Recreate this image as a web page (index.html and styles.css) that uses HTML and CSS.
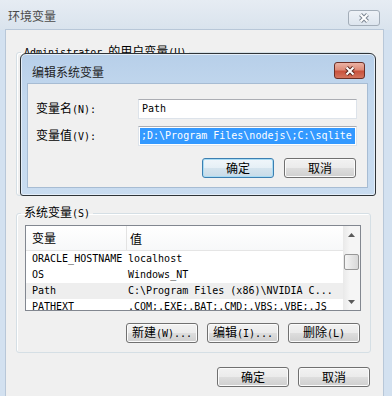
FILE: index.html
```html
<!DOCTYPE html>
<html lang="zh-CN">
<head>
<meta charset="UTF-8">
<title>环境变量</title>
<link rel="stylesheet" href="styles.css">
</head>
<body>

<div class="window">
    <div class="win-title">
        <span class="win-caption">环境变量</span>
        <span class="close-btn inactive">
            <svg width="12" height="10" viewBox="0 0 12 10"><path d="M2.5 1.5 L9.5 8.5 M9.5 1.5 L2.5 8.5" stroke="#7d8793" stroke-width="4"/><path d="M2.5 1.5 L9.5 8.5 M9.5 1.5 L2.5 8.5" stroke="#fff" stroke-width="2"/></svg>
        </span>
    </div>
    <div class="win-client">
        <fieldset class="group user-group">
            <legend><span class="m">Administrator </span>的用户变量<span class="m">(U)</span></legend>
        </fieldset>
        <fieldset class="group sys-group">
            <legend>系统变量<span class="m">(S)</span></legend>
            <div class="listview">
                <div class="list-body">
                    <div class="list-header">
                        <span class="col-name">变量</span>
                        <span class="col-value">值</span>
                    </div>
                    <div class="row m"><span class="col-name">ORACLE_HOSTNAME</span><span class="col-value">localhost</span></div>
                    <div class="row m"><span class="col-name">OS</span><span class="col-value">Windows_NT</span></div>
                    <div class="row m selected"><span class="col-name">Path</span><span class="col-value">C:\Program Files (x86)\NVIDIA C...</span></div>
                    <div class="row m"><span class="col-name">PATHEXT</span><span class="col-value">.COM;.EXE;.BAT;.CMD;.VBS;.VBE;.JS</span></div>
                </div>
                <div class="scrollbar">
                    <div class="sb-btn"><svg width="7" height="4" viewBox="0 0 7 4"><polygon points="0,4 3.5,0 7,4" fill="#5a5a5a"/></svg></div>
                    <div class="sb-track"><div class="sb-thumb"></div></div>
                    <div class="sb-btn"><svg width="7" height="4" viewBox="0 0 7 4"><polygon points="0,0 3.5,4 7,0" fill="#5a5a5a"/></svg></div>
                </div>
            </div>
            <div class="btn-row">
                <button>新建<span class="m">(W)...</span></button>
                <button>编辑<span class="m">(I)...</span></button>
                <button>删除<span class="m">(L)</span></button>
            </div>
        </fieldset>
        <div class="btn-row footer">
            <button>确定</button>
            <button>取消</button>
        </div>
    </div>
</div>

<div class="dialog">
    <div class="dlg-title">
        <span class="dlg-caption">编辑系统变量</span>
        <span class="close-btn active">
            <svg width="12" height="10" viewBox="0 0 12 10"><path d="M2.5 1.5 L9.5 8.5 M9.5 1.5 L2.5 8.5" stroke="#5b2a22" stroke-width="4"/><path d="M2.5 1.5 L9.5 8.5 M9.5 1.5 L2.5 8.5" stroke="#fff" stroke-width="2"/></svg>
        </span>
    </div>
    <div class="dlg-client">
        <div class="field-grid">
            <span class="label">变量名<span class="m">(N):</span></span>
            <div class="textbox m">Path</div>
            <span class="label">变量值<span class="m">(V):</span></span>
            <div class="textbox m"><span class="selection">;D:\Program Files\nodejs\;C:\sqlite</span></div>
        </div>
        <div class="btn-row dlg-buttons">
            <button class="default">确定</button>
            <button>取消</button>
        </div>
    </div>
</div>

</body>
</html>
```

FILE: styles.css
```css
body {
    margin: 0;
    width: 392px;
    height: 396px;
    overflow: hidden;
    position: relative;
    background: #d3e1f0;
    font-family: "Noto Sans CJK SC", sans-serif;
    font-size: 12px;
    color: #000;
}

.m {
    font-family: "DejaVu Sans Mono", monospace;
    font-size: 10px;
}

/* outer window */
.win-title {
    height: 30px;
    box-sizing: border-box;
    display: flex;
    justify-content: space-between;
    align-items: flex-start;
    padding: 0 12px 0 8px;
    background: linear-gradient(#e6ecf3, #d9e3ed);
}

.win-caption {
    margin-top: 9px;
    line-height: 14px;
    color: #4a4a4a;
}

.close-btn {
    display: flex;
    justify-content: center;
    align-items: center;
    box-sizing: border-box;
    border-radius: 3px;
}

.close-btn.inactive {
    margin-top: 10px;
    width: 32px;
    height: 16px;
    border: 1px solid #a3adb8;
    background: linear-gradient(#eef2f7, #dde5ee);
}

.win-client {
    margin-left: 6px;
    width: 377px;
    height: 366px;
    background: #f0f0f0;
    box-shadow: 0 0 0 1px #b8c7d8;
    overflow: hidden;
}

/* group boxes */
.group {
    margin: 0 0 0 10px;
    width: 355px;
    box-sizing: border-box;
    border: 1px solid #d5dfe5;
    border-radius: 3px;
    box-shadow: inset 1px 1px 0 #fff;
}

.group legend {
    padding: 0 3px;
    margin-left: -4px;
    line-height: 12px;
}

.user-group {
    margin-top: 15px;
    height: 151px;
    padding: 0;
}

.user-group legend {
    margin-left: 4px;
}

.sys-group {
    margin-top: 10px;
    padding: 5px 9px 9px 8px;
}

/* list view */
.listview {
    display: flex;
    height: 86px;
    box-sizing: border-box;
    border: 1px solid #828790;
    background: #fff;
}

.list-body {
    flex: 1;
    overflow: hidden;
}

.list-header {
    height: 25px;
    box-sizing: border-box;
    display: flex;
    align-items: center;
    border-bottom: 1px solid #e5e5e5;
    background: linear-gradient(#fff, #f7f8f9);
}

.list-header .col-name {
    border-right: 1px solid #e3e3e3;
    line-height: 24px;
}

.col-name {
    width: 94px;
    padding-left: 6px;
    flex-shrink: 0;
}

.col-value {
    padding-left: 3px;
    white-space: nowrap;
}

.row {
    display: flex;
    height: 16px;
    line-height: 16px;
    white-space: nowrap;
}

.row .col-value {
    padding-left: 2px;
}

.row.selected {
    background: #eeeeee;
}

.scrollbar {
    width: 17px;
    display: flex;
    flex-direction: column;
    background: linear-gradient(to right, #e9e9e9, #f5f5f5 40%, #f5f5f5);
}

.sb-btn {
    height: 17px;
    display: flex;
    justify-content: center;
    align-items: center;
}

.sb-track {
    flex: 1;
}

.sb-thumb {
    margin: 11px 1px 0 1px;
    height: 16px;
    box-sizing: border-box;
    border: 1px solid #979797;
    border-radius: 2px;
    background: linear-gradient(to right, #f5f5f5, #e6e6e6 50%, #d8d8d8);
}

/* buttons */
.btn-row {
    display: flex;
    justify-content: flex-end;
    gap: 9px;
}

.sys-group .btn-row {
    margin-top: 12px;
    padding-right: 1px;
}

.footer {
    margin-top: 14px;
    padding-right: 13px;
}

button {
    width: 72px;
    height: 20px;
    padding: 0;
    box-sizing: border-box;
    border: 1px solid #707070;
    border-radius: 3px;
    background: linear-gradient(#f2f2f2 0%, #ebebeb 48%, #dddddd 52%, #cfcfcf 100%);
    box-shadow: inset 0 0 0 1px #fbfbfb;
    font-family: "Noto Sans CJK SC", sans-serif;
    font-size: 12px;
    line-height: 16px;
    color: #000;
}

button.default {
    border-color: #3c7fb1;
    box-shadow: inset 0 0 0 1px #a9dcf4;
    background: linear-gradient(#f0f6fa 0%, #e6f0f6 48%, #d5e4ee 52%, #c8dbe8 100%);
}

/* edit dialog */
.dialog {
    position: absolute;
    left: 20px;
    top: 53px;
    width: 356px;
    height: 143px;
    box-sizing: border-box;
    border: 1px solid #2f3438;
    border-radius: 6px 6px 3px 3px;
    background: linear-gradient(#b7cfe9, #c3d8ee 30%, #c9dcf0);
    padding: 0 7px 7px 6px;
    box-shadow: inset 0 0 0 1px #e4eef9;
}

.dlg-title {
    height: 29px;
    display: flex;
    justify-content: space-between;
    align-items: flex-start;
    padding: 0 3px 0 5px;
}

.dlg-caption {
    margin-top: 11px;
    line-height: 14px;
    color: #1e1e1e;
}

.close-btn.active {
    margin-top: 8px;
    width: 31px;
    height: 17px;
    border: 1px solid #6b2f26;
    background: linear-gradient(#eab2a4 0%, #de8c79 45%, #c9523d 55%, #d3745e 100%);
}

.dlg-client {
    height: 105px;
    box-sizing: border-box;
    background: #f0f0f0;
    border: 1px solid #a7bcd3;
    padding: 15px 10px 0 8px;
}

.field-grid {
    display: grid;
    grid-template-columns: 102px 219px;
    row-gap: 7px;
    align-items: center;
}

.label {
    line-height: 14px;
}

.textbox {
    height: 20px;
    box-sizing: border-box;
    border: 1px solid #dde3ea;
    border-top-color: #abadb3;
    background: #fff;
    padding: 0 3px;
    line-height: 18px;
    white-space: nowrap;
    overflow: hidden;
}

.textbox .selection {
    display: block;
    margin: 1px -2px;
    padding-left: 1px;
    line-height: 16px;
    background: #3399ff;
    color: #fff;
    overflow: hidden;
}

.dlg-buttons {
    margin-top: 12px;
    padding-right: 1px;
    gap: 10px;
}
```
